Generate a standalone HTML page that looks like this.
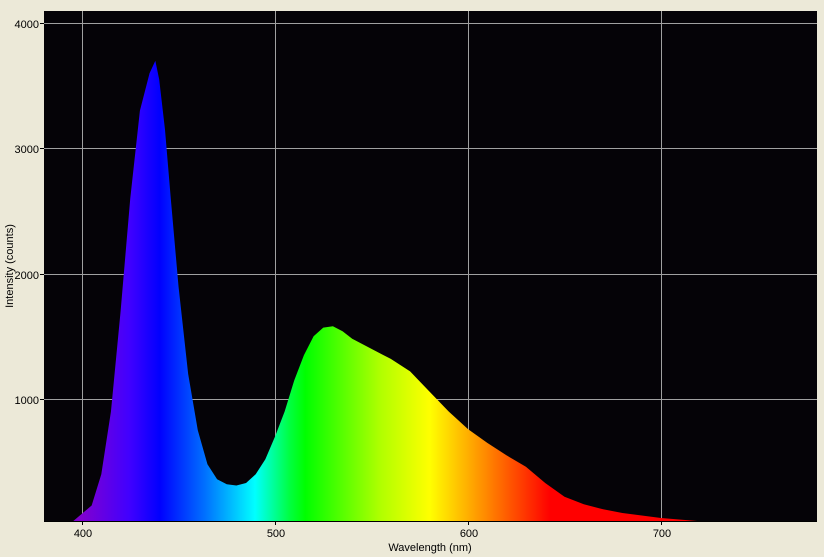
<!DOCTYPE html>
<html><head><meta charset="utf-8"><style>
html,body{margin:0;padding:0;background:#ECE9D8;}
svg{display:block;}
text{font-family:"Liberation Sans",sans-serif;font-size:11px;fill:#000;}
</style></head><body>
<svg width="824" height="557" viewBox="0 0 824 557" xmlns="http://www.w3.org/2000/svg">
<defs>
<linearGradient id="sp" gradientUnits="userSpaceOnUse" x1="44" y1="0" x2="817" y2="0">
<stop offset="0" stop-color="#7000b0"/>
<stop offset="0.049" stop-color="#8000d0"/>
<stop offset="0.111" stop-color="#4000ff"/>
<stop offset="0.150" stop-color="#0000ff"/>
<stop offset="0.208" stop-color="#0070ff"/>
<stop offset="0.273" stop-color="#00ffff"/>
<stop offset="0.318" stop-color="#00ff40"/>
<stop offset="0.338" stop-color="#00ff00"/>
<stop offset="0.435" stop-color="#b0ff00"/>
<stop offset="0.499" stop-color="#ffff00"/>
<stop offset="0.577" stop-color="#ff8000"/>
<stop offset="0.655" stop-color="#ff0000"/>
<stop offset="1" stop-color="#ff0000"/>
</linearGradient>
<clipPath id="cp"><rect x="44" y="11" width="773" height="510"/></clipPath>
</defs>
<rect x="44" y="11" width="773" height="510" fill="#050307"/>
<g stroke="#a0a0a0" stroke-width="1">
<line x1="82.5" y1="11" x2="82.5" y2="521"/>
<line x1="275.5" y1="11" x2="275.5" y2="521"/>
<line x1="468.5" y1="11" x2="468.5" y2="521"/>
<line x1="661.5" y1="11" x2="661.5" y2="521"/>
<line x1="44" y1="23.5" x2="817" y2="23.5"/>
<line x1="44" y1="148.5" x2="817" y2="148.5"/>
<line x1="44" y1="274.5" x2="817" y2="274.5"/>
<line x1="44" y1="399.5" x2="817" y2="399.5"/>
</g>
<polygon clip-path="url(#cp)" fill="url(#sp)" points="53,524 53.05,523.7 72.35,521.8 91.65,505.5 101.3,474.2 110.95,411.5 120.6,311.3 130.25,198.5 139.9,110.8 149.55,73.2 155.34,60.7 159.2,79.5 164.99,129.6 170.78,198.5 178.5,286.2 188.15,373.9 197.8,430.3 207.45,464.2 217.1,479.2 226.75,484.2 236.4,485.5 246.05,483 255.7,474.2 265.35,459.2 275,436.6 284.65,411.5 294.3,380.2 303.95,355.1 313.6,336.3 323.25,327.6 332.9,326.3 342.55,331.3 352.2,338.8 371.5,348.9 390.8,358.9 410.1,371.4 429.4,391.5 448.7,411.5 468,429.1 487.3,442.9 506.6,455.4 525.9,466.7 545.2,483 564.5,496.7 583.8,504.3 603.1,509.3 622.4,513 661,518 699.6,521.2 776.8,523.7 777,524"/>
<line x1="44" y1="521.5" x2="817" y2="521.5" stroke="#000" stroke-width="1"/>
<g stroke="#000" stroke-width="1">
<line x1="40" y1="23.5" x2="44" y2="23.5"/>
<line x1="40" y1="148.5" x2="44" y2="148.5"/>
<line x1="40" y1="274.5" x2="44" y2="274.5"/>
<line x1="40" y1="399.5" x2="44" y2="399.5"/>
<line x1="82.5" y1="521" x2="82.5" y2="525"/>
<line x1="275.5" y1="521" x2="275.5" y2="525"/>
<line x1="468.5" y1="521" x2="468.5" y2="525"/>
<line x1="661.5" y1="521" x2="661.5" y2="525"/>
</g>
<g text-anchor="end">
<text x="39" y="28">4000</text>
<text x="39" y="153">3000</text>
<text x="39" y="279">2000</text>
<text x="39" y="404">1000</text>
</g>
<g text-anchor="middle">
<text x="83" y="537">400</text>
<text x="276" y="537">500</text>
<text x="469" y="537">600</text>
<text x="662" y="537">700</text>
<text x="430" y="551">Wavelength (nm)</text>
<text transform="translate(13,266) rotate(-90)">Intensity (counts)</text>
</g>
</svg>
</body></html>
